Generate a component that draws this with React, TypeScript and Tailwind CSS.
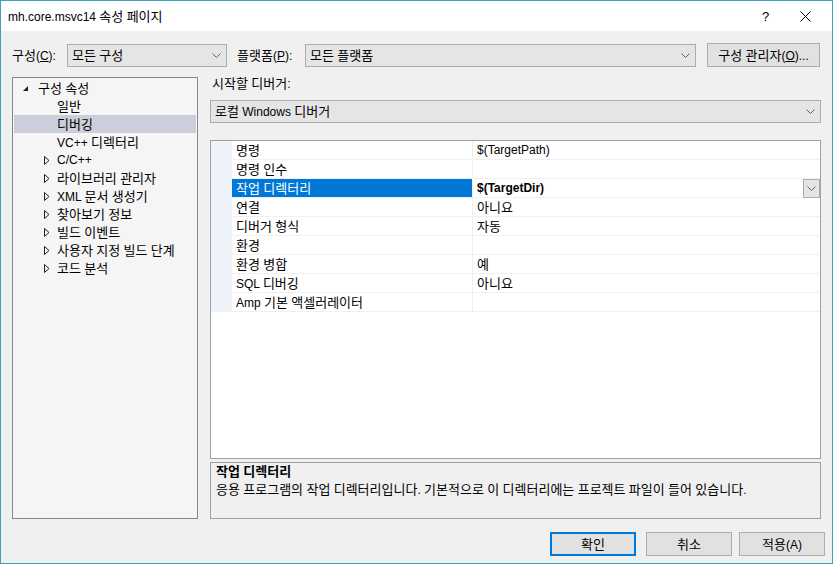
import type { ReactNode } from 'react';

const treeItems = [
  { label: '일반', arrow: false, selected: false },
  { label: '디버깅', arrow: false, selected: true },
  { label: 'VC++ 디렉터리', arrow: false, selected: false },
  { label: 'C/C++', arrow: true, selected: false },
  { label: '라이브러리 관리자', arrow: true, selected: false },
  { label: 'XML 문서 생성기', arrow: true, selected: false },
  { label: '찾아보기 정보', arrow: true, selected: false },
  { label: '빌드 이벤트', arrow: true, selected: false },
  { label: '사용자 지정 빌드 단계', arrow: true, selected: false },
  { label: '코드 분석', arrow: true, selected: false },
];

const props = [
  { name: '명령', value: '$(TargetPath)' },
  { name: '명령 인수', value: '' },
  { name: '작업 디렉터리', value: '$(TargetDir)', selected: true },
  { name: '연결', value: '아니요' },
  { name: '디버거 형식', value: '자동' },
  { name: '환경', value: '' },
  { name: '환경 병합', value: '예' },
  { name: 'SQL 디버깅', value: '아니요' },
  { name: 'Amp 기본 액셀러레이터', value: '' },
];

// Hangul runs get a slightly bigger size so they take the width Malgun Gothic has
function K({ children }: { children: string }) {
  const parts = children.split(/([\uAC00-\uD7A3]+)/);
  return (
    <span>
      {parts.map((s, i) =>
        /[\uAC00-\uD7A3]/.test(s) ? (
          <span key={i} className="text-[13px]">
            {s}
          </span>
        ) : (
          s
        )
      )}
    </span>
  );
}

function Chevron() {
  return (
    <svg width="9" height="5" viewBox="0 0 9 5" className="shrink-0">
      <path d="M0.5 0.5 L4.5 4.5 L8.5 0.5" fill="none" stroke="#606060" strokeWidth="1" />
    </svg>
  );
}

function Combo({ width, children }: { width: string; children: ReactNode }) {
  return (
    <div
      className={`${width} h-[23px] bg-[#e5e5e5] border border-[#acacac] flex items-center justify-between pl-[4px] pr-[5px]`}
    >
      <span>{children}</span>
      <Chevron />
    </div>
  );
}

function Button({ children, primary, className = '' }: { children: ReactNode; primary?: boolean; className?: string }) {
  return (
    <div
      className={`w-[86px] h-[24px] bg-[#e1e1e1] flex items-center justify-center ${className} ${
        primary ? 'border-2 border-[#0078d7]' : 'border border-[#adadad]'
      }`}
    >
      <span>{children}</span>
    </div>
  );
}

export default function App() {
  return (
    <div className="w-[833px] h-[564px] flex flex-col bg-[#f0f0f0] border border-[#40a0c0] text-[12px] text-black font-['Liberation_Sans','Noto_Sans_CJK_KR',sans-serif] leading-none">
      {/* ---------- Title bar ---------- */}
      <div className="h-[30px] bg-white flex items-center pl-[7px]">
        <span className="flex-1">
          mh.core.msvc14 <K>속성 페이지</K>
        </span>
        <span className="w-[20px] text-[13px]">?</span>
        <div className="w-[46px] flex justify-center mr-[4px]">
          <svg width="11" height="11" viewBox="0 0 11 11">
            <path d="M0.5 0.5 L10.5 10.5 M10.5 0.5 L0.5 10.5" stroke="#000" strokeWidth="1" />
          </svg>
        </div>
      </div>

      <div className="flex flex-col px-[11px]">
        {/* ---------- Config / platform row ---------- */}
        <div className="mt-[12px] h-[24px] flex items-center">
          <span className="w-[55px]">
            <K>구성</K>(<u>C</u>):
          </span>
          <Combo width="w-[160px]">
            <K>모든 구성</K>
          </Combo>
          <span className="w-[68px] ml-[10px]">
            <K>플랫폼</K>(<u>P</u>):
          </span>
          <Combo width="w-[391px]">
            <K>모든 플랫폼</K>
          </Combo>
          <div className="ml-[11px] w-[113px] h-[24px] bg-[#e1e1e1] border border-[#adadad] flex items-center justify-center">
            <span>
              <K>구성 관리자</K>(<u>O</u>)...
            </span>
          </div>
        </div>

        {/* ---------- Main area ---------- */}
        <div className="mt-[10px] h-[442px] flex">
          {/* Tree */}
          <div className="w-[186px] h-full border border-[#828790] bg-[#f5f5f5] pt-[1px] px-[1px]">
            <div className="h-[18px] flex items-center pl-[9px]">
              <svg width="5" height="5" viewBox="0 0 5 5" className="shrink-0">
                <path d="M5 0 L5 5 L0 5 Z" fill="#222" />
              </svg>
              <span className="ml-[10px]">
                <K>구성 속성</K>
              </span>
            </div>
            {treeItems.map((t) => (
              <div
                key={t.label}
                className={`h-[18px] flex items-center ${t.arrow ? 'pl-[30px]' : 'pl-[43px]'} ${
                  t.selected ? 'bg-[#cccedb]' : ''
                }`}
              >
                {t.arrow && (
                  <svg width="6" height="9" viewBox="0 0 6 9" className="shrink-0 mr-[7px]">
                    <path d="M0.5 0.5 L5 4.5 L0.5 8.5 Z" fill="none" stroke="#222" strokeWidth="1" />
                  </svg>
                )}
                <K>{t.label}</K>
              </div>
            ))}
          </div>

          {/* Right column */}
          <div className="ml-[12px] w-[611px] flex flex-col">
            <div className="h-[14px] leading-[14px] pl-[2px]">
              <K>시작할 디버거</K>:
            </div>
            <div className="mt-[9px]">
              <Combo width="w-full">
                <K>로컬 Windows 디버거</K>
              </Combo>
            </div>

            {/* Property grid */}
            <div className="mt-[17px] h-[319px] border border-[#a0a0a0] bg-white">
              {props.map((p) => (
                <div key={p.name} className="h-[19px] flex">
                  <div className="w-[21px] bg-[#eef3fa]" />
                  <div className="flex-1 flex border-b border-[#f0f0f0]">
                    <div
                      className={`w-[241px] border-r border-[#f0f0f0] flex items-center pl-[4px] ${
                        p.selected ? 'bg-[#0078d7] text-white' : ''
                      }`}
                    >
                      <K>{p.name}</K>
                    </div>
                    <div className="flex-1 flex items-center pl-[4px] justify-between">
                      <span className={p.selected ? 'font-bold' : ''}>
                        <K>{p.value}</K>
                      </span>
                      {p.selected && (
                        <div className="w-[17px] h-[19px] -mb-px bg-[#e5e5e5] border border-[#acacac] flex items-center justify-center">
                          <Chevron />
                        </div>
                      )}
                    </div>
                  </div>
                </div>
              ))}
            </div>

            {/* Description */}
            <div className="mt-[3px] h-[57px] border border-[#a0a0a0] bg-[#f0f0f0] pl-[5px] leading-[18px]">
              <div className="font-bold">
                <K>작업 디렉터리</K>
              </div>
              <div>
                <K>응용 프로그램의 작업 디렉터리입니다. 기본적으로 이 디렉터리에는 프로젝트 파일이 들어 있습니다.</K>
              </div>
            </div>
          </div>
        </div>

        {/* ---------- Buttons ---------- */}
        <div className="mt-[13px] flex justify-end -mr-[4px]">
          <Button primary className="mr-[10px]">
            <K>확인</K>
          </Button>
          <Button className="mr-[7px]">
            <K>취소</K>
          </Button>
          <Button>
            <K>적용</K>(A)
          </Button>
        </div>
      </div>
    </div>
  );
}
